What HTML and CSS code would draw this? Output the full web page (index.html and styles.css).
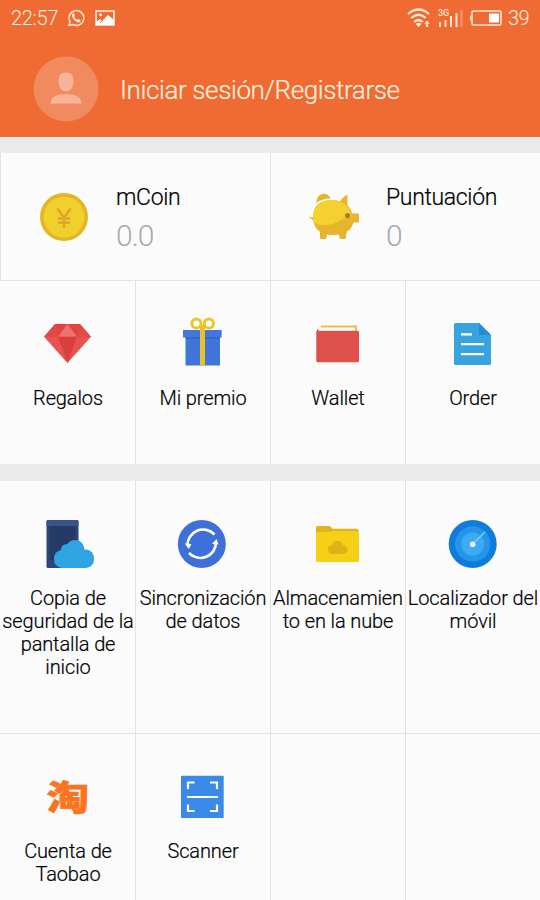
FILE: index.html
```html
<!DOCTYPE html>
<html lang="es">
<head>
<meta charset="utf-8">
<title>Cuenta</title>
<link rel="stylesheet" href="styles.css">
</head>
<body>
<header class="header">
  <div class="status">
    <span class="time">22:57</span>
    <svg class="call" width="18" height="18" viewBox="0 0 18 18"><path d="M2 16.2 3 12.6A7.4 7.4 0 1 1 6 15.5Z" fill="none" stroke="#ffe6cf" stroke-width="1.5"/><path d="M5.5 4.5 7 4.3 8 6.7 7.2 8 10 10.800l1.300-.8 2.300 1.200-.4 1.500q-1.500 1.300-3.700.1Q6.500 11 5.100 7.800 4.500 5.700 5.500 4.500Z" fill="#ffe6cf"/></svg>
    <svg class="photo" width="20" height="16" viewBox="0 0 20 16"><path d="M1 1h18v14H1Z" fill="none" stroke="#ffeede" stroke-width="1.600"/><path d="M1 12l4-3 2 2 6-6 6 5v5H1Z" fill="#fff"/><path d="m5 13 3-3" stroke="#ef6b33"/><circle cx="5.500" cy="4.700" r="1.500" fill="#ffeede"/></svg>
    <span class="spacer"></span>
    <svg class="wifi" width="24" height="20" viewBox="0 0 24 20"><g fill="none" stroke="#ffe6cf" stroke-width="2.200"><path d="M1 6Q11.500-3 22 6M4.200 10Q11.500 3.500 18.800 10M7.300 14Q11.500 10 15.700 14"/></g><path d="M8.500 16Q11.500 13.500 14.500 16L11.500 19Z" fill="#ffe6cf"/><path d="m20 12.500 2.700 3.200h-1.600V19h-2.200v-3.300h-1.600Z" fill="#ffe6cf"/></svg>
    <svg class="signal" width="25" height="20" viewBox="0 0 25 20"><text x="0" y="7.500" class="net">3G</text><path d="M2 14v5M7.500 12v7M13 8v11M18.500 5v14" stroke="#ffe6cf" stroke-width="2"/><path d="M23.500 2v17" stroke="#f69a6c" stroke-width="2"/></svg>
    <svg class="battery" width="32" height="16" viewBox="0 0 32 16"><rect x="2" y="1" width="29" height="14" rx="1.500" fill="none" stroke="#ffe6cf" stroke-width="1.600"/><path d="M.5 5.500v5" stroke="#ffe6cf" stroke-width="1.400"/><path d="M19 3.500h10v9H19Z" fill="#fff"/></svg>
    <span class="level">39</span>
  </div>
  <div class="account">
    <svg class="avatar" width="66" height="66" viewBox="0 0 66 66"><circle cx="33" cy="33" r="32.500" fill="#f28a60"/><path d="M25.500 23.500Q25.500 16.500 33 16.500t7.500 7V26q-1 9.500-7.500 9.500T25.500 26ZM17.500 47.500Q18 38 33 38t15.500 9.500Z" fill="#f8b498"/></svg>
    <span class="login">Iniciar sesión/Registrarse</span>
  </div>
</header>

<section class="balances">
  <div class="balance">
    <svg class="icon" width="48" height="48" viewBox="0 0 48 48"><circle cx="24" cy="24" r="24" fill="#e4b526"/><circle cx="24" cy="24" r="20.500" fill="#f1cf2c"/><path d="m17.500 15.500 6.500 9.500 6.500-9.500M24 24v11M18 25.500h12M18 29.800h12" fill="none" stroke="#dca626" stroke-width="2.500"/></svg>
    <div class="figures"><div class="name">mCoin</div><div class="value">0.0</div></div>
  </div>
  <div class="balance">
    <svg class="icon" width="48" height="48" viewBox="0 0 48 48"><path d="M6 10Q7 1 13.500.7 18.500.4 20.500 5.500 12 5.500 6 10Z" fill="#e5b62c"/><path d="M-1 23.500q2 1.500 5 .5l1 3q-3 .5-4-1.500-2 0-2-2ZM10 38v6.500q0 1.500 1.500 1.500H15q1.300 0 1.500-1.500L17 41ZM29 41l.5 3.500q.2 1.500 1.500 1.500h3.500q1.300 0 1.300-1.500L37 37Z" fill="#e5b62c"/><path d="M3 25Q3 7 22 7q3.500 0 8 1.200Q33 3.500 37.500 1.500L37.300 12q3.200 3 5 8.500H48q1 0 1 1V28q0 1.500-1 1.500h-4.500Q40 42 23 42 4 42 3 25Z" fill="#e5b62c"/><path d="M3 25Q3 7 22 7q10 0 16 7 3 5 3.500 10-7 0-14 5-10 6-23 1Q3 28 3 25Z" fill="#f4d12f"/><circle cx="37.500" cy="22.500" r="2.600" fill="#ad7d17"/></svg>
    <div class="figures"><div class="name">Puntuación</div><div class="value">0</div></div>
  </div>
</section>

<section class="grid rewards">
  <div class="cell">
    <svg class="icon" width="48" height="48" viewBox="0 0 48 48"><path d="M11 4h25L47 16.700 23.500 43 0 16.700Z" fill="#e65350"/><path d="m11 4 3 12.700L23.500 4ZM36 4l-3 12.700L23.500 4Z" fill="#df4540"/><path d="M23.500 4 14 16.700h19Z" fill="#f0716b"/><path d="M11 4 0 16.700h14ZM36 4l11 12.700H33Z" fill="#e34a46"/><path d="M14 16.700h19L23.500 43Z" fill="#da403b"/></svg>
    <div class="label">Regalos</div>
  </div>
  <div class="cell">
    <svg class="icon" width="48" height="48" viewBox="0 0 48 48"><path d="M6.500 17H41v28.500H6.500Z" fill="#3f76da"/><path d="M4 10h38.700v7.500H4Z" fill="#4177db"/><path d="M6.500 17.500H41v1.300H6.500Z" fill="#315fbb"/><path d="M21 5h5v40.500h-5Z" fill="#ecbf2b"/><g fill="#fff" stroke="#ecc52c" stroke-width="3"><circle cx="17.400" cy="3.500" r="4.600"/><circle cx="29.900" cy="3.500" r="4.600"/></g></svg>
    <div class="label">Mi premio</div>
  </div>
  <div class="cell">
    <svg class="icon" width="48" height="48" viewBox="0 0 48 48"><path d="M2.300 12 4.500 8v4Z" fill="#9f3131"/><path d="M4.500 7.500h38V12h-38Z" fill="#fff"/><path d="M7 6.500h35V11" fill="none" stroke="#edbd43" stroke-width="1.800"/><rect x="2.300" y="10.700" width="42.700" height="31.500" rx="1.500" fill="#dd504b"/></svg>
    <div class="label">Wallet</div>
  </div>
  <div class="cell">
    <svg class="icon" width="48" height="48" viewBox="0 0 48 48"><path d="M6.500 3H30l12 12v28.500Q42 45 40.500 45h-34Q5 45 5 43.500v-39Q5 3 6.500 3Z" fill="#37a4df"/><path d="M30 3v12h12Z" fill="#238dce"/><path d="M12 14.300h11M12 24.200h23M12 34.200h23" stroke="#fff" stroke-width="2.300"/></svg>
    <div class="label">Order</div>
  </div>
</section>

<section class="grid services">
  <div class="cell">
    <svg class="icon" width="48" height="48" viewBox="0 0 48 48"><rect x="2.500" width="32" height="48" rx="1.500" fill="#2b4778"/><path d="M2.500 1.500Q2.500 0 4 0h29q1.500 0 1.500 1.500V6h-32Z" fill="#38558a"/><path d="M5.500 6h26v34h-26Z" fill="#253b66"/><path d="M18 48Q10 47 10 39q0-7.500 7-9 0-6 6.500-6 2.500-4 7.500-4 8.500 0 9.500 9.500 9.500 0 9.500 9.500 0 8-8 9Z" fill="#2ea4e2"/></svg>
    <div class="label">Copia de seguridad de la pantalla de inicio</div>
  </div>
  <div class="cell">
    <svg class="icon" width="48" height="48" viewBox="0 0 48 48"><circle cx="22.800" cy="24" r="24" fill="#3f70da"/><g fill="none" stroke="#fff" stroke-width="2.600"><path d="M35.500 14.500A15.600 15.600 0 0 0 8.500 26M10 33A15.600 15.600 0 0 0 37 22"/></g><path d="m5.800 23.500 6.700.5-2.800 5ZM39.500 24.500 33 24l4.500-5Z" fill="#fff"/></svg>
    <div class="label">Sincronización de datos</div>
  </div>
  <div class="cell">
    <svg class="icon" width="48" height="48" viewBox="0 0 48 48"><path d="M2 7.500Q2 6 3.500 6H16l2.500 2.700H43q1.500 0 1.700 3L44 15H2Z" fill="#dfb41d"/><path d="M2 12h14l2-1h22q4 .3 5 2v27.500q0 1.500-1.500 1.500h-40Q2 42 2 40.500Z" fill="#f5d016"/><path d="M18.500 34q-4.500-.4-4.500-4.600 0-4 4-4.400 1-4 5.500-4 5 0 5.500 4.500 4.500 0 4.500 4.500 0 3.500-4 4Z" fill="#dfb315"/></svg>
    <div class="label">Almacenamien<br>to en la nube</div>
  </div>
  <div class="cell">
    <svg class="icon" width="48" height="48" viewBox="0 0 48 48"><circle cx="23.700" cy="24" r="24" fill="#0f7bdb"/><circle cx="23.700" cy="24" r="17.700" fill="#2196ea"/><circle cx="23.700" cy="24" r="11.500" fill="#3eaaf4"/><path d="M23.700 24 36 12" stroke="#7ed0ff" stroke-width="1.200"/><circle cx="23.700" cy="24.300" r="2.800" fill="#e8f7ff"/></svg>
    <div class="label">Localizador del móvil</div>
  </div>
</section>

<section class="grid extras">
  <div class="cell">
    <svg class="icon" width="48" height="48" viewBox="0 0 48 48"><text class="tao" transform="translate(2.500 36.500) scale(1.150 .92)">淘</text></svg>
    <div class="label">Cuenta de Taobao</div>
  </div>
  <div class="cell">
    <svg class="icon" width="48" height="48" viewBox="0 0 48 48"><rect x="2" y="2.700" width="42.700" height="42.300" rx="1" fill="#3b8aea"/><path d="M9 16V9.500h6.500M31 9.500h7V16M38 31.500V38h-7M15.500 38H9v-6.500M8 24h31" fill="none" stroke="#fff" stroke-width="2.200"/></svg>
    <div class="label">Scanner</div>
  </div>
  <div class="cell"></div>
  <div class="cell"></div>
</section>
</body>
</html>
```
FILE: styles.css
```css
* { box-sizing: border-box; }

body {
  margin: 0;
  height: 900px;
  overflow: hidden;
  background: #ebebeb;
  color: #000;
  font-family: Roboto, "Liberation Sans", sans-serif;
  font-weight: 300;
}

svg { display: block; flex: none; }

.header {
  height: 137px;
  background: #ef6b33;
  color: #fff0de;
}

.status {
  display: flex;
  align-items: center;
  height: 35px;
  padding: 0 10px 0 11px;
  font-size: 20px;
}
.time { width: 47px; letter-spacing: -0.3px; }
.call { margin-left: 9px; }
.photo { margin-left: 10px; }
.spacer { flex: 1; }
.signal { margin-left: 7px; }
.battery { margin-left: 7px; }
.level { width: 22px; margin-left: 6px; letter-spacing: -0.5px; }
.net { font-size: 9px; font-weight: 500; fill: #ffe6cf; }

.account {
  display: flex;
  align-items: center;
  gap: 21px;
  height: 107px;
  padding-left: 33px;
}
.login {
  padding-top: 2px;
  font-size: 26px;
  letter-spacing: -0.38px;
  -webkit-text-stroke: 0.2px;
}

.balances {
  display: grid;
  grid-template-columns: 1fr 1fr;
  height: 128px;
  margin-top: 16px;
  border-bottom: 1px solid #e2e2e2;
}
.balance {
  display: flex;
  align-items: center;
  gap: 28px;
  padding-left: 39px;
  border-left: 1px solid #e2e2e2;
  background: #fbfbfb;
}
.figures { padding-top: 8px; }
.name {
  font-size: 23px;
  line-height: 30px;
  letter-spacing: -0.33px;
  -webkit-text-stroke: 0.2px;
}
.value {
  font-size: 30px;
  line-height: 46px;
  letter-spacing: -1px;
  color: #aaa;
}

.grid {
  display: grid;
  grid-template-columns: repeat(4, 135px);
}
.cell {
  display: flex;
  flex-direction: column;
  align-items: center;
  padding-top: 39px;
  border-left: 1px solid #e2e2e2;
  background: #fbfbfb;
}
.cell:first-child { border-left-color: #fbfbfb; }
.icon { overflow: visible; }
.label {
  width: 134px;
  margin-top: 19px;
  font-size: 20px;
  line-height: 23px;
  letter-spacing: -0.12px;
  text-align: center;
  -webkit-text-stroke: 0.2px;
}

.rewards { height: 183px; }
.services {
  height: 253px;
  margin-top: 17px;
  border-bottom: 1px solid #e2e2e2;
}
.extras { height: 166px; }

.tao {
  font: 900 37px "Noto Sans CJK SC", sans-serif;
  fill: #fa7420;
  stroke: #fa7420;
  stroke-width: 0.6px;
}
```
